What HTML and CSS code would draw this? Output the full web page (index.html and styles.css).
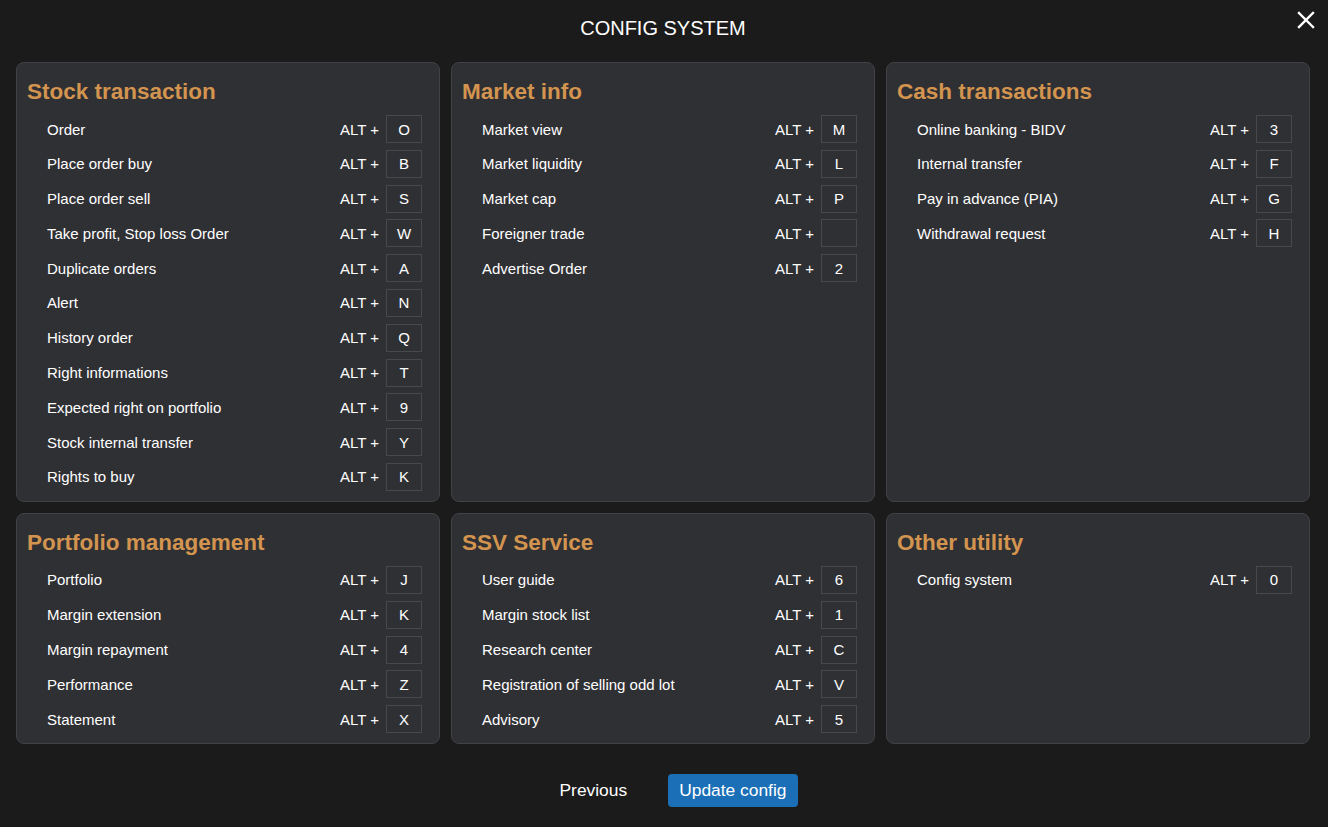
FILE: index.html
```html
<!DOCTYPE html>
<html>
<head>
<meta charset="utf-8">
<link rel="stylesheet" href="styles.css">
</head>
<body>
<div class="modal">
  <header class="header">
    <h1 class="header-title">CONFIG SYSTEM</h1>
    <button class="close" aria-label="Close">
      <svg width="18" height="18" viewBox="0 0 18 18"><path d="M2 2 L16 16 M16 2 L2 16" stroke="#fff" stroke-width="2.4" stroke-linecap="square"/></svg>
    </button>
  </header>

  <div class="grid">
    <section class="card">
      <h2 class="card-title">Stock transaction</h2>
      <div class="rows">
        <div class="row"><span class="label">Order</span><span class="alt">ALT +</span><span class="key">O</span></div>
        <div class="row"><span class="label">Place order buy</span><span class="alt">ALT +</span><span class="key">B</span></div>
        <div class="row"><span class="label">Place order sell</span><span class="alt">ALT +</span><span class="key">S</span></div>
        <div class="row"><span class="label">Take profit, Stop loss Order</span><span class="alt">ALT +</span><span class="key">W</span></div>
        <div class="row"><span class="label">Duplicate orders</span><span class="alt">ALT +</span><span class="key">A</span></div>
        <div class="row"><span class="label">Alert</span><span class="alt">ALT +</span><span class="key">N</span></div>
        <div class="row"><span class="label">History order</span><span class="alt">ALT +</span><span class="key">Q</span></div>
        <div class="row"><span class="label">Right informations</span><span class="alt">ALT +</span><span class="key">T</span></div>
        <div class="row"><span class="label">Expected right on portfolio</span><span class="alt">ALT +</span><span class="key">9</span></div>
        <div class="row"><span class="label">Stock internal transfer</span><span class="alt">ALT +</span><span class="key">Y</span></div>
        <div class="row"><span class="label">Rights to buy</span><span class="alt">ALT +</span><span class="key">K</span></div>
      </div>
    </section>

    <section class="card">
      <h2 class="card-title">Market info</h2>
      <div class="rows">
        <div class="row"><span class="label">Market view</span><span class="alt">ALT +</span><span class="key">M</span></div>
        <div class="row"><span class="label">Market liquidity</span><span class="alt">ALT +</span><span class="key">L</span></div>
        <div class="row"><span class="label">Market cap</span><span class="alt">ALT +</span><span class="key">P</span></div>
        <div class="row"><span class="label">Foreigner trade</span><span class="alt">ALT +</span><span class="key"></span></div>
        <div class="row"><span class="label">Advertise Order</span><span class="alt">ALT +</span><span class="key">2</span></div>
      </div>
    </section>

    <section class="card">
      <h2 class="card-title">Cash transactions</h2>
      <div class="rows">
        <div class="row"><span class="label">Online banking - BIDV</span><span class="alt">ALT +</span><span class="key">3</span></div>
        <div class="row"><span class="label">Internal transfer</span><span class="alt">ALT +</span><span class="key">F</span></div>
        <div class="row"><span class="label">Pay in advance (PIA)</span><span class="alt">ALT +</span><span class="key">G</span></div>
        <div class="row"><span class="label">Withdrawal request</span><span class="alt">ALT +</span><span class="key">H</span></div>
      </div>
    </section>

    <section class="card">
      <h2 class="card-title">Portfolio management</h2>
      <div class="rows">
        <div class="row"><span class="label">Portfolio</span><span class="alt">ALT +</span><span class="key">J</span></div>
        <div class="row"><span class="label">Margin extension</span><span class="alt">ALT +</span><span class="key">K</span></div>
        <div class="row"><span class="label">Margin repayment</span><span class="alt">ALT +</span><span class="key">4</span></div>
        <div class="row"><span class="label">Performance</span><span class="alt">ALT +</span><span class="key">Z</span></div>
        <div class="row"><span class="label">Statement</span><span class="alt">ALT +</span><span class="key">X</span></div>
      </div>
    </section>

    <section class="card">
      <h2 class="card-title">SSV Service</h2>
      <div class="rows">
        <div class="row"><span class="label">User guide</span><span class="alt">ALT +</span><span class="key">6</span></div>
        <div class="row"><span class="label">Margin stock list</span><span class="alt">ALT +</span><span class="key">1</span></div>
        <div class="row"><span class="label">Research center</span><span class="alt">ALT +</span><span class="key">C</span></div>
        <div class="row"><span class="label">Registration of selling odd lot</span><span class="alt">ALT +</span><span class="key">V</span></div>
        <div class="row"><span class="label">Advisory</span><span class="alt">ALT +</span><span class="key">5</span></div>
      </div>
    </section>

    <section class="card">
      <h2 class="card-title">Other utility</h2>
      <div class="rows">
        <div class="row"><span class="label">Config system</span><span class="alt">ALT +</span><span class="key">0</span></div>
      </div>
    </section>
  </div>

  <footer class="footer">
    <button class="btn btn-text">Previous</button>
    <button class="btn btn-primary">Update config</button>
  </footer>
</div>
</body>
</html>
```

FILE: styles.css
```css
* { box-sizing: border-box; }
html, body {
  margin: 0;
  padding: 0;
  background: #1b1b1b;
  color: #ffffff;
  font-family: "Liberation Sans", Arial, sans-serif;
}
.modal {
  width: 1328px;
  height: 827px;
  padding: 0 18px 0 16px;
  position: relative;
}
.header {
  height: 56px;
  display: flex;
  align-items: center;
  justify-content: center;
  margin-bottom: 6px;
}
.header-title {
  margin: 0;
  font-size: 20px;
  font-weight: normal;
  line-height: 56px;
  color: #fff;
}
.close {
  position: absolute;
  top: 11px;
  right: 13px;
  background: none;
  border: none;
  padding: 0;
  width: 18px;
  height: 18px;
  cursor: pointer;
}
.close svg { display: block; }
.grid {
  display: grid;
  grid-template-columns: repeat(3, 1fr);
  gap: 11px;
}
.card {
  background: #2f3034;
  border: 1px solid #414246;
  border-radius: 8px;
  padding: 14px 17px 10px 10px;
}
.card-title {
  margin: 0 0 8px 0;
  font-size: 22.5px;
  font-weight: bold;
  line-height: 30px;
  color: #d3944f;
}
.rows {
  display: flex;
  flex-direction: column;
  gap: 6.8px;
}
.row {
  display: flex;
  align-items: center;
  height: 28px;
  padding-left: 20px;
  font-size: 15px;
}
.label { flex: 1; color: #fff; }
.alt { margin-right: 7px; color: #fff; }
.key {
  width: 36px;
  height: 28px;
  border: 1px solid #48494d;
  display: flex;
  align-items: center;
  justify-content: center;
  font-size: 15px;
  color: #fff;
}
.footer {
  display: flex;
  justify-content: center;
  align-items: center;
  margin-top: 30px;
  gap: 29px;
  padding-left: 19px;
}
.btn {
  font-family: "Liberation Sans", Arial, sans-serif;
  font-size: 17.4px;
  height: 33px;
  border: none;
  border-radius: 4px;
  color: #fff;
  cursor: pointer;
}
.btn-text {
  background: none;
  padding: 0 12px;
}
.btn-primary {
  background: #1a6fb6;
  padding: 0 11px;
}
```
